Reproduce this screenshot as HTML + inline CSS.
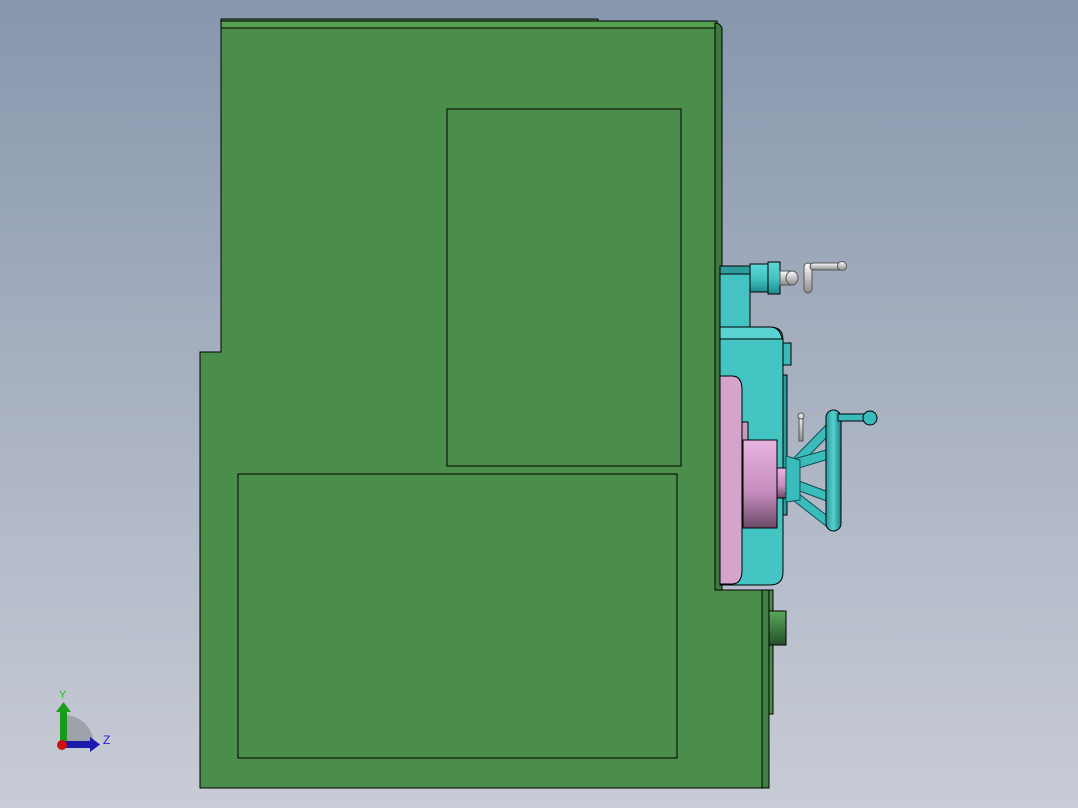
<!DOCTYPE html>
<html><head><style>
html,body{margin:0;padding:0;width:1078px;height:808px;overflow:hidden;}
body{background:linear-gradient(to bottom,#8797ad 0%,#a9b2c2 50%,#c8ccd6 100%);}
svg{position:absolute;left:0;top:0;}
</style></head><body>
<svg width="1078" height="808" viewBox="0 0 1078 808" xmlns="http://www.w3.org/2000/svg">
<defs>
<linearGradient id="cy" x1="0" y1="0" x2="0" y2="1"><stop offset="0" stop-color="#5fd6d6"/><stop offset="0.5" stop-color="#44c4c4"/><stop offset="1" stop-color="#1e8a8e"/></linearGradient>
<linearGradient id="pk" x1="0" y1="0" x2="0" y2="1"><stop offset="0" stop-color="#e8b4e0"/><stop offset="0.6" stop-color="#c48cbc"/><stop offset="1" stop-color="#6a4a68"/></linearGradient>
<linearGradient id="gr" x1="0" y1="0" x2="0" y2="1"><stop offset="0" stop-color="#5aa85a"/><stop offset="1" stop-color="#24502a"/></linearGradient>
<linearGradient id="wh" x1="0" y1="0" x2="0" y2="1"><stop offset="0" stop-color="#ffffff"/><stop offset="1" stop-color="#8a8a8a"/></linearGradient>
<linearGradient id="wheel" x1="0" y1="0" x2="1" y2="0"><stop offset="0" stop-color="#2a9a9c"/><stop offset="0.5" stop-color="#55d0d0"/><stop offset="1" stop-color="#1f7f82"/></linearGradient>
</defs>
<g stroke="#000" stroke-width="1">
<rect x="221" y="19" width="377" height="3" fill="#4a8c4a"/>
<rect x="221" y="21" width="496" height="7" fill="#56a052"/>
<path d="M221 28 H715 V590 H767 V788 H200 V352 H221 Z" fill="#4b8d4b"/>
<path d="M715 23 Q720 23 722 28 V590 H715 Z" fill="#3d7a3f"/>
<rect x="447" y="109" width="234" height="357" fill="none"/>
<rect x="238" y="474" width="439" height="284" fill="none"/>
<rect x="762" y="590" width="7" height="198" fill="#3f7f41"/>
<rect x="769" y="590" width="4" height="124" fill="#4b8d4b"/>
<rect x="769" y="611" width="17" height="34" fill="url(#gr)"/>
<rect x="720" y="266" width="30" height="62" fill="#45c2c2"/>
<rect x="720" y="266" width="30" height="8" fill="#2f9c9c"/>
<rect x="750" y="264" width="30" height="28" fill="url(#cy)"/>
<rect x="768" y="262" width="12" height="32" fill="url(#cy)"/>
<rect x="780" y="271" width="10" height="14" fill="url(#wh)" stroke="#555"/>
<ellipse cx="792" cy="278" rx="6" ry="7" fill="url(#wh)" stroke="#555"/>
<rect x="804" y="263" width="8" height="30" rx="4" fill="url(#wh)" stroke="#555"/>
<rect x="810" y="263" width="32" height="7" rx="3.5" fill="url(#wh)" stroke="#555"/>
<circle cx="842" cy="266" r="4.5" fill="url(#wh)" stroke="#555"/>
<path d="M720 327 H770 Q783 327 783 340 V572 Q783 585 770 585 H720 Z" fill="#45c4c4"/>
<path d="M720 327 H770 Q780 327 782 339 H720 Z" fill="#5ad2d2"/>
<rect x="783" y="343" width="8" height="22" fill="#3cb8b8"/>
<rect x="783" y="375" width="4" height="140" fill="#2f9c9c"/>
<path d="M720 376 H732 Q742 376 742 390 V570 Q742 584 732 584 H720 Z" fill="#d4a4cc"/>
<rect x="742" y="422" width="6" height="22" fill="#c49cbc"/>
<rect x="743" y="440" width="34" height="88" fill="url(#pk)"/>
<rect x="777" y="468" width="13" height="30" fill="url(#pk)"/>
<g stroke="#0d5050" stroke-width="1" fill="#3bbcbc">
<path d="M786 466 L828 423 L832 432 L791 474 Z"/>
<path d="M790 460 L830 449 L832 458 L792 470 Z"/>
<path d="M791 478 L831 493 L829 502 L789 487 Z"/>
<path d="M789 486 L830 518 L826 526 L785 494 Z"/>
<path d="M786 456 L800 460 L800 500 L786 502 Z"/>
</g>
<rect x="799" y="415" width="4" height="26" fill="url(#wh)" stroke="#555"/>
<circle cx="801" cy="416" r="3" fill="#ddd" stroke="#555"/>
<rect x="826" y="410" width="15" height="121" rx="7.5" fill="url(#wheel)"/>
<rect x="838" y="414" width="30" height="7" fill="#3bbcbc"/>
<circle cx="870" cy="418" r="7" fill="#3bbcbc"/>
</g>
<path d="M64 745 V715 A30 30 0 0 1 94 745 Z" fill="#9ea3ab"/>
<rect x="60" y="710" width="7" height="35" fill="#1a9a1a"/>
<path d="M56 712 L63.5 702 L71 712 Z" fill="#18a018"/>
<rect x="62" y="741" width="30" height="7" fill="#1a1aa8"/>
<path d="M90 737 L100 744.5 L90 752 Z" fill="#1a1ab0"/>
<circle cx="62" cy="745" r="5" fill="#cc1010"/>
<text x="59" y="698" font-family="Liberation Sans,sans-serif" font-size="11" fill="#20c020">Y</text>
<text x="103" y="744" font-family="Liberation Sans,sans-serif" font-size="12" fill="#2020e0">Z</text>
</svg>
</body></html>
